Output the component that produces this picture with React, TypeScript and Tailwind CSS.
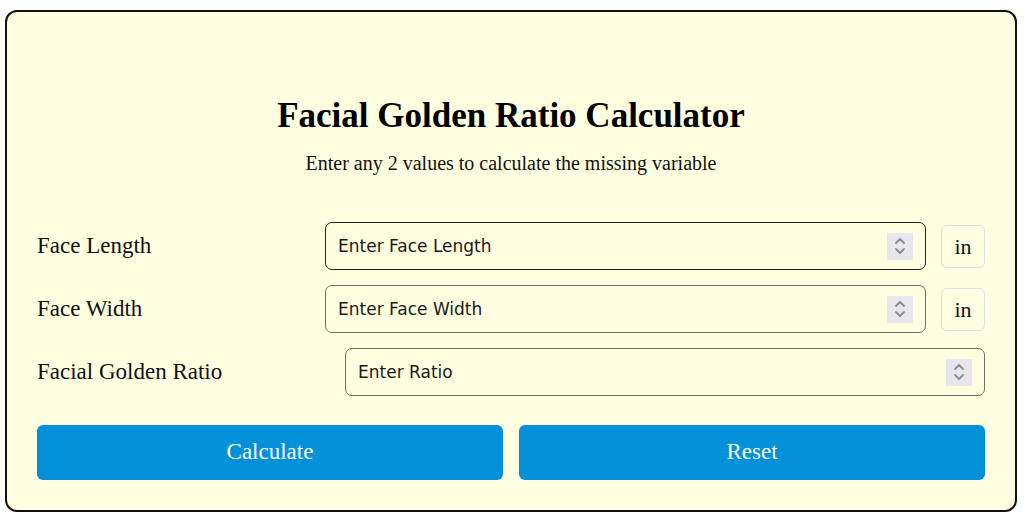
import React from "react";

function Spinner() {
  return (
    <div className="flex h-[27px] w-[26px] flex-col items-center justify-center bg-[#e6e6ec]">
      <svg width="14" height="22" viewBox="0 0 14 22" fill="none" stroke="#8a8a96" strokeWidth="1.8" strokeLinecap="round" strokeLinejoin="round">
        <path d="M3 8 L7 4 L11 8" />
        <path d="M3 14 L7 18 L11 14" />
      </svg>
    </div>
  );
}

function Field({ placeholder, border }: { placeholder: string; border: string }) {
  return (
    <div className={`flex h-[48px] flex-1 items-center justify-between rounded-[7px] border bg-[#fffee0] pl-[12px] pr-[12px] ${border}`}>
      <span className="pt-[2px] text-[17px] text-[#1a1a1a]" style={{ fontFamily: '"DejaVu Sans", Verdana, sans-serif' }}>
        {placeholder}
      </span>
      <Spinner />
    </div>
  );
}

function Unit() {
  return (
    <div className="ml-[15px] flex h-[43px] w-[44px] items-center justify-center rounded-[6px] border border-[#dbe1e4] text-[22px] text-[#111]">
      in
    </div>
  );
}

export default function App() {
  const serif = { fontFamily: '"Liberation Serif", "Times New Roman", serif' };
  return (
    <div className="min-h-[518px] w-[1024px] bg-white pt-[10px]" style={serif}>
      <div className="ml-[5px] flex h-[502px] w-[1012px] flex-col rounded-[12px] border-2 border-[#111] bg-[#fffee0] px-[30px] pt-[84px]">
        <h1 className="text-center text-[35px] font-bold leading-[40px] text-black">Facial Golden Ratio Calculator</h1>
        <p className="mt-[15px] text-center text-[20px] leading-[24px] text-[#111]">Enter any 2 values to calculate the missing variable</p>
        <div className="mt-[47px] flex flex-col gap-[15px]">
          <div className="flex items-center">
            <div className="w-[288px] text-[23px] text-[#111]">Face Length</div>
            <Field placeholder="Enter Face Length" border="border-[#222]" />
            <Unit />
          </div>
          <div className="flex items-center">
            <div className="w-[288px] text-[23px] text-[#111]">Face Width</div>
            <Field placeholder="Enter Face Width" border="border-[#6f6f66]" />
            <Unit />
          </div>
          <div className="flex items-center">
            <div className="w-[308px] text-[23px] text-[#111]">Facial Golden Ratio</div>
            <Field placeholder="Enter Ratio" border="border-[#6f6f66]" />
          </div>
        </div>
        <div className="mt-[29px] flex gap-[16px]">
          <button className="h-[55px] flex-1 rounded-[6px] bg-[#0091d8] text-[23px] text-white" style={serif}>Calculate</button>
          <button className="h-[55px] flex-1 rounded-[6px] bg-[#0091d8] text-[23px] text-white" style={serif}>Reset</button>
        </div>
      </div>
    </div>
  );
}
